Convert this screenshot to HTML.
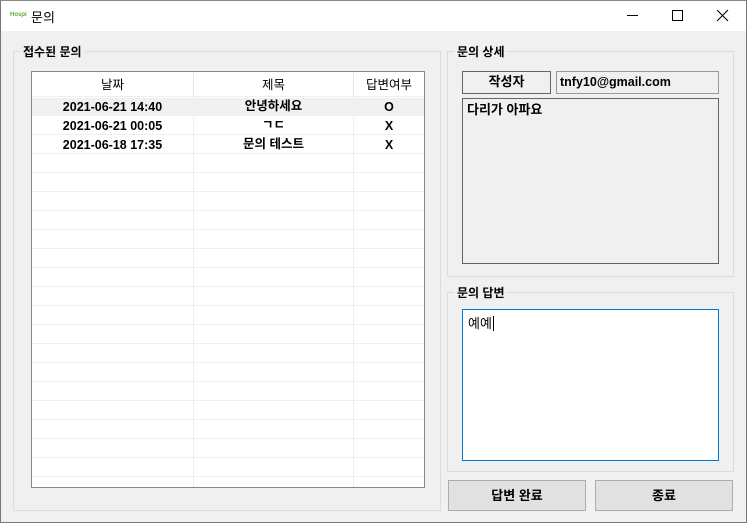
<!DOCTYPE html><html><head><meta charset="utf-8"><style>
*{margin:0;padding:0;box-sizing:border-box}
body{width:747px;height:523px;background:#f0f0f0;font-family:"Liberation Sans","Noto Sans CJK KR",sans-serif;font-size:12px;font-weight:bold;color:#000;position:relative;overflow:hidden}
.a{position:absolute}
.win{position:absolute;left:0;top:0;width:747px;height:523px;border:1px solid #777;border-top-color:#888}
.grp{position:absolute;border:1px solid #dcdcdc}
.lg{position:absolute;background:#f0f0f0;padding:0 3px;font-size:12px;top:-9px;left:6px;font-weight:bold}
.c{position:absolute;text-align:center;line-height:18px;height:18px;font-size:12.5px}
</style></head><body>
<div class="a" style="left:0;top:0;width:747px;height:31px;background:#fff"></div>
<div class="a" style="left:10px;top:12px;font-size:6px;color:#6a3;font-weight:bold">Hospi</div>
<div class="a" style="left:31px;top:7px;font-size:13px;font-weight:normal">문의</div>
<div class="a" style="left:627px;top:15px;width:11px;height:1px;background:#000"></div>
<div class="a" style="left:672px;top:10px;width:11px;height:11px;border:1px solid #000"></div>
<svg class="a" style="left:716px;top:9px" width="13" height="13"><path d="M1 1L12 12M12 1L1 12" stroke="#000" stroke-width="1.1"/></svg>

<div class="grp" style="left:13px;top:51px;width:428px;height:460px"><span class="lg">접수된 문의</span></div>
<div class="a" style="left:31px;top:71px;width:394px;height:417px;border:1px solid #828790;background:#fff;overflow:hidden">
 <div class="a" style="left:0;top:25px;width:392px;height:390px;background:repeating-linear-gradient(#fff 0,#fff 18px,#efefef 18px,#efefef 19px)"></div>
 <div class="a" style="left:161px;top:0;width:1px;height:415px;background:#efefef"></div>
 <div class="a" style="left:321px;top:0;width:1px;height:415px;background:#efefef"></div>
 <div class="a" style="left:0;top:0;width:392px;height:25px;background:#fff;border-bottom:1px solid #efefef"></div>
 <div class="a" style="left:161px;top:1px;width:1px;height:24px;background:#e5e5e5"></div>
 <div class="a" style="left:321px;top:1px;width:1px;height:24px;background:#e5e5e5"></div>
 <div class="a" style="left:0;top:26px;width:392px;height:18px;background:#f0f0f0"></div>
 <div class="c" style="left:0;width:161px;top:4px;font-weight:normal">날짜</div>
 <div class="c" style="left:162px;width:159px;top:4px;font-weight:normal">제목</div>
 <div class="c" style="left:322px;width:70px;top:4px;font-weight:normal">답변여부</div>
 <div class="c" style="left:0;width:161px;top:26px">2021-06-21 14:40</div>
 <div class="c" style="left:162px;width:159px;top:25px">안녕하세요</div>
 <div class="c" style="left:322px;width:70px;top:26px">O</div>
 <div class="c" style="left:0;width:161px;top:45px">2021-06-21 00:05</div>
 <div class="c" style="left:162px;width:159px;top:44px">ㄱㄷ</div>
 <div class="c" style="left:322px;width:70px;top:45px">X</div>
 <div class="c" style="left:0;width:161px;top:64px">2021-06-18 17:35</div>
 <div class="c" style="left:162px;width:159px;top:63px">문의 테스트</div>
 <div class="c" style="left:322px;width:70px;top:64px">X</div>
</div>

<div class="grp" style="left:447px;top:51px;width:287px;height:226px"><span class="lg">문의 상세</span></div>
<div class="a" style="left:462px;top:71px;width:89px;height:23px;border:1px solid #646464;text-align:center;line-height:20px;font-size:13px">작성자</div>
<div class="a" style="left:556px;top:71px;width:163px;height:23px;border:1px solid #999;padding-left:3px;line-height:20px;font-size:12.5px">tnfy10@gmail.com</div>
<div class="a" style="left:462px;top:98px;width:257px;height:166px;border:1px solid #646464;padding:0 4px;font-size:13px">다리가 아파요</div>

<div class="grp" style="left:447px;top:292px;width:287px;height:180px"><span class="lg">문의 답변</span></div>
<div class="a" style="left:462px;top:309px;width:257px;height:152px;border:1px solid #0078d7;background:#fff;padding:3px 5px;font-size:13px;font-weight:normal">예예<span style="border-left:1px solid #000;margin-left:1px"></span></div>

<div class="a" style="left:448px;top:480px;width:138px;height:31px;border:1px solid #adadad;background:#e1e1e1;text-align:center;line-height:29px;font-size:13px">답변 완료</div>
<div class="a" style="left:595px;top:480px;width:138px;height:31px;border:1px solid #adadad;background:#e1e1e1;text-align:center;line-height:29px;font-size:13px">종료</div>
<div class="win"></div>
</body></html>
